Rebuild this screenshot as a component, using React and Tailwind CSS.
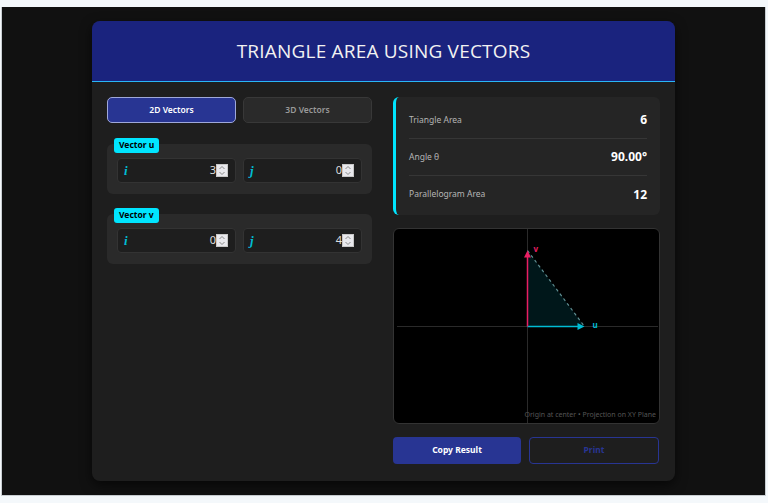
import React, { useState } from 'react';

function Spinner() {
  return (
    <div className="w-[12px] h-[13px] bg-[#e9e9ed] border border-[#c8c8c8] flex flex-col items-center justify-center shrink-0">
      <svg width="8" height="11" viewBox="0 0 8 11">
        <path d="M1.5 4 L4 1.5 L6.5 4" fill="none" stroke="#8a8a8a" strokeWidth="1" />
        <path d="M1.5 7 L4 9.5 L6.5 7" fill="none" stroke="#8a8a8a" strokeWidth="1" />
      </svg>
    </div>
  );
}

function CompInput({ label, value }) {
  return (
    <div className="flex-1 min-w-0 h-[25px] bg-[#1e1e1e] border border-[#333] rounded-[4px] flex items-center pl-[6px] pr-[7px]">
      <span className="text-[#00bcd4] italic font-bold text-[13px] font-['Liberation_Serif',serif] leading-none">{label}</span>
      <input
        readOnly
        value={value}
        className="flex-1 w-0 min-w-0 bg-transparent text-right text-[11px] text-[#ddd] outline-none font-['Noto_Sans',sans-serif]"
      />
      <Spinner />
    </div>
  );
}

function VectorGroup({ name, x, y }) {
  return (
    <div className="relative mt-[6px]">
      <div className="absolute left-[7px] -top-[6px] bg-[#00e5ff] text-black text-[8.5px] font-bold px-[5px] h-[15px] flex items-center rounded-[3px]">
        {name}
      </div>
      <div className="bg-[#2a2a2a] rounded-[6px] px-[10px] pt-[14px] pb-[11px] flex gap-[7px]">
        <CompInput label="i" value={x} />
        <CompInput label="j" value={y} />
      </div>
    </div>
  );
}

function ResultRow({ label, value, last }) {
  return (
    <div className={`flex items-center justify-between h-[37px] ${last ? '' : 'border-b border-[#363636]'}`}>
      <span className="text-[8.5px] text-[#b5b5b5]">{label}</span>
      <span className="text-[12px] font-bold text-white">{value}</span>
    </div>
  );
}

function Plot() {
  const cx = 133.5;
  const cy = 97.5;
  const s = 19;
  const ux = cx + 3 * s;
  const vy = cy - 4 * s;
  return (
    <div className="relative h-[196px] bg-black border border-[#333] rounded-[6px] overflow-hidden">
      <svg width="267" height="196" viewBox="0 0 267 196" className="block">
        <line x1="3" y1={cy} x2="264" y2={cy} stroke="#2a2a2a" strokeWidth="1" />
        <line x1={cx} y1="0" x2={cx} y2="196" stroke="#2a2a2a" strokeWidth="1" />
        <polygon points={`${cx},${cy} ${ux},${cy} ${cx},${vy}`} fill="rgba(0,229,255,0.1)" />
        <line x1={cx} y1={vy} x2={ux} y2={cy} stroke="#5f8f93" strokeWidth="1.2" strokeDasharray="3 3" />
        <line x1={cx} y1={cy} x2={ux - 5} y2={cy} stroke="#00bcd4" strokeWidth="1.5" />
        <polygon points={`${ux},${cy} ${ux - 7},${cy - 3.5} ${ux - 7},${cy + 3.5}`} fill="#00bcd4" />
        <line x1={cx} y1={cy} x2={cx} y2={vy + 5} stroke="#e91e63" strokeWidth="1.5" />
        <polygon points={`${cx},${vy} ${cx - 3.5},${vy + 7} ${cx + 3.5},${vy + 7}`} fill="#e91e63" />
        <text x={ux + 8} y={cy + 1} fill="#00bcd4" fontSize="8" fontWeight="bold" fontFamily="Noto Sans, sans-serif">u</text>
        <text x={cx + 6} y={vy + 1} fill="#e91e63" fontSize="8" fontWeight="bold" fontFamily="Noto Sans, sans-serif">v</text>
      </svg>
      <div className="absolute right-[3px] bottom-[3px] text-[7px] text-[#555]">
        Origin at center • Projection on XY Plane
      </div>
    </div>
  );
}

export default function App() {
  const [mode, setMode] = useState('2d');

  return (
    <div className="w-[768px] h-[503px] bg-[#f4f8fb] pt-[7px] px-[1px] font-['Noto_Sans',sans-serif]">
      <div className="h-[489px] w-[765px] bg-[#111111] border border-[#c9ced2] border-t-0 pt-[14px] flex justify-center">
        <div className="w-[583px] h-[460px] bg-[#1e1e1e] rounded-[8px] shadow-[0_4px_12px_rgba(0,0,0,0.6)] overflow-hidden flex flex-col">
          {/* Header */}
          <div className="h-[61px] bg-[#1a237e] border-b border-[#29b6f6] flex items-center justify-center">
            <h1 className="text-[19px] text-[#f2f2f2] tracking-[0.2px] font-['Open_Sans',sans-serif]">TRIANGLE AREA USING VECTORS</h1>
          </div>

          {/* Body */}
          <div className="flex gap-[21px] px-[15px] pt-[15px]">
            {/* Left */}
            <div className="w-[265px] flex flex-col">
              <div className="flex gap-[7px] mb-[15px]">
                <button
                  onClick={() => setMode('2d')}
                  className={`flex-1 h-[26px] rounded-[5px] text-[8.5px] font-semibold ${mode === '2d' ? 'bg-[#283593] border border-[#9fa8da] text-white' : 'bg-[#2a2a2a] border border-[#383838] text-[#999]'}`}
                >
                  2D Vectors
                </button>
                <button
                  onClick={() => setMode('3d')}
                  className={`flex-1 h-[26px] rounded-[5px] text-[8.5px] font-semibold ${mode === '3d' ? 'bg-[#283593] border border-[#9fa8da] text-white' : 'bg-[#2a2a2a] border border-[#383838] text-[#999]'}`}
                >
                  3D Vectors
                </button>
              </div>
              <VectorGroup name="Vector u" x="3" y="0" />
              <div className="h-[14px]" />
              <VectorGroup name="Vector v" x="0" y="4" />
            </div>

            {/* Right */}
            <div className="w-[267px] flex flex-col">
              <div className="bg-[#252525] border-l-[3px] border-[#00e5ff] rounded-[6px] pl-[13px] pr-[13px] pt-[5px] pb-[2px] mb-[13px]">
                <ResultRow label="Triangle Area" value="6" />
                <ResultRow label="Angle θ" value="90.00°" />
                <ResultRow label="Parallelogram Area" value="12" last />
              </div>
              <Plot />
              <div className="flex gap-[8px] mt-[13px]">
                <button className="w-[128px] h-[27px] bg-[#283593] rounded-[4px] text-white text-[8.5px] font-bold">
                  Copy Result
                </button>
                <button className="w-[130px] h-[27px] border border-[#283593] rounded-[4px] text-[#283593] text-[8.5px] font-bold">
                  Print
                </button>
              </div>
            </div>
          </div>
        </div>
      </div>
    </div>
  );
}
